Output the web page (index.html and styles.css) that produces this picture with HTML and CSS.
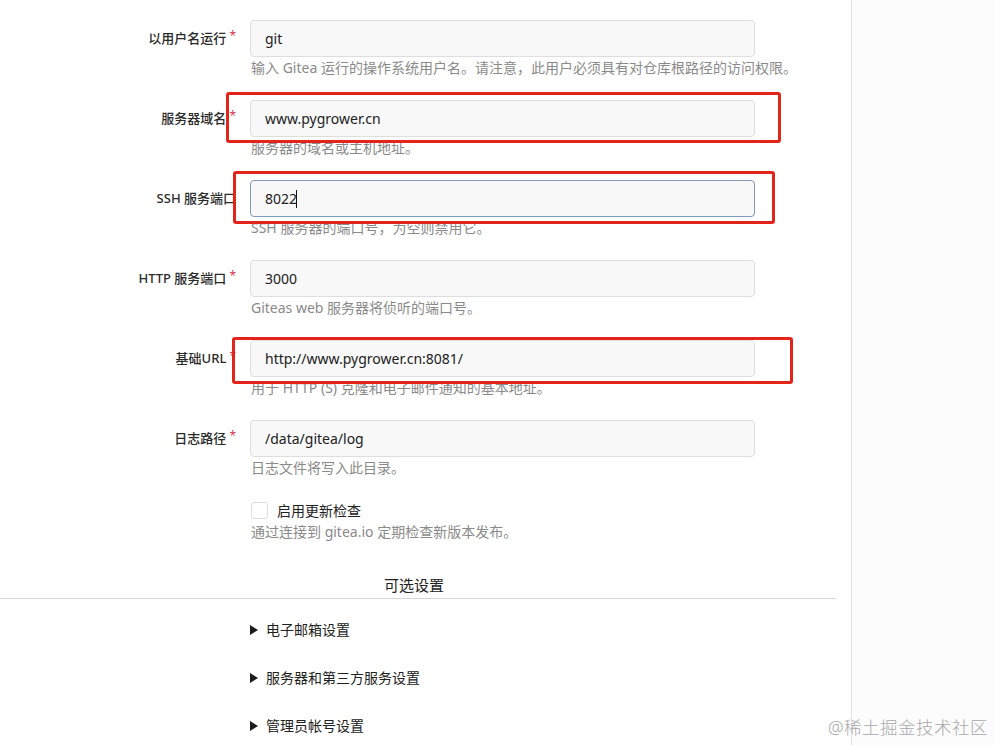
FILE: index.html
```html
<!DOCTYPE html>
<html lang="zh-CN">
<head>
    <meta charset="UTF-8">
    <meta name="viewport" content="width=device-width, initial-scale=1.0">
    <title>Gitea 安装</title>
    <link rel="stylesheet" href="styles.css">
</head>
<body>
    <div class="page">
        <main class="install-form">
            <div class="field">
                <label class="field-label required">以用户名运行</label>
                <div class="field-body">
                    <input class="text-input" type="text" value="git">
                    <p class="help">输入 Gitea 运行的操作系统用户名。请注意，此用户必须具有对仓库根路径的访问权限。</p>
                </div>
            </div>

            <div class="field">
                <label class="field-label required">服务器域名</label>
                <div class="field-body">
                    <input class="text-input" type="text" value="www.pygrower.cn">
                    <p class="help">服务器的域名或主机地址。</p>
                </div>
                <span class="mark mark-domain"></span>
            </div>

            <div class="field">
                <label class="field-label">SSH 服务端口</label>
                <div class="field-body">
                    <div class="input-wrap">
                        <input class="text-input focused" type="text" value="8022">
                        <span class="caret"></span>
                    </div>
                    <p class="help">SSH 服务器的端口号，为空则禁用它。</p>
                </div>
                <span class="mark mark-ssh"></span>
            </div>

            <div class="field">
                <label class="field-label required">HTTP 服务端口</label>
                <div class="field-body">
                    <input class="text-input" type="text" value="3000">
                    <p class="help">Giteas web 服务器将侦听的端口号。</p>
                </div>
            </div>

            <div class="field">
                <label class="field-label required">基础URL</label>
                <div class="field-body">
                    <input class="text-input" type="text" value="http://www.pygrower.cn:8081/">
                    <p class="help">用于 HTTP (S) 克隆和电子邮件通知的基本地址。</p>
                </div>
                <span class="mark mark-url"></span>
            </div>

            <div class="field">
                <label class="field-label required">日志路径</label>
                <div class="field-body">
                    <input class="text-input" type="text" value="/data/gitea/log">
                    <p class="help">日志文件将写入此目录。</p>
                </div>
            </div>

            <div class="field checkbox-field">
                <span class="field-label"></span>
                <div class="field-body">
                    <label class="checkbox">
                        <span class="box"></span>
                        <span>启用更新检查</span>
                    </label>
                    <p class="help">通过连接到 gitea.io 定期检查新版本发布。</p>
                </div>
            </div>

            <h4 class="dividing-header">可选设置</h4>

            <details class="optional">
                <summary>电子邮箱设置</summary>
            </details>
            <details class="optional">
                <summary>服务器和第三方服务设置</summary>
            </details>
            <details class="optional">
                <summary>管理员帐号设置</summary>
            </details>
        </main>
        <aside class="side"></aside>
    </div>
    <div class="watermark">@稀土掘金技术社区</div>
</body>
</html>
```

FILE: styles.css
```css
html, body {
    margin: 0;
    padding: 0;
    height: 745px;
    overflow: hidden;
}
body {
    font-family: "Noto Sans", "Noto Sans CJK SC", sans-serif;
    font-size: 14px;
    color: #212121;
    background-color: #ffffff;
    position: relative;
}
.page {
    display: flex;
    height: 745px;
}
.install-form {
    width: 851px;
    flex: none;
    border-right: 1px solid #e2e2e4;
    padding-top: 20px;
}
.side {
    flex: 1;
    background-color: #fcfcfd;
}
.field {
    position: relative;
    display: grid;
    grid-template-columns: 236px 505px;
    column-gap: 14px;
    margin-bottom: 22px;
}
.field-label {
    text-align: right;
    font-size: 13px;
    font-weight: 500;
    line-height: 37px;
    color: #2a2a2a;
}
.required::after {
    content: "*";
    color: #d4364a;
    font-size: 12px;
    font-weight: 400;
    margin-left: 3px;
    vertical-align: top;
    line-height: 32px;
}
.text-input {
    display: block;
    box-sizing: border-box;
    width: 505px;
    height: 37px;
    margin: 0;
    padding: 0 14px;
    font-family: inherit;
    font-size: 14px;
    color: #212121;
    background-color: #f8f8f9;
    border: 1px solid #dedee0;
    border-radius: 4px;
    outline: none;
}
.text-input.focused {
    border-color: #7f9bb6;
}
.input-wrap {
    position: relative;
}
.caret {
    position: absolute;
    left: 46px;
    top: 10px;
    width: 1px;
    height: 18px;
    background-color: #111111;
}
.help {
    margin: 1px 0 0 1px;
    font-size: 14px;
    line-height: 20px;
    color: #8a8a8a;
    white-space: nowrap;
}
.checkbox-field .field-label {
    line-height: 20px;
}
.checkbox {
    display: flex;
    align-items: center;
    gap: 9px;
    height: 20px;
    font-size: 14px;
    color: #212121;
    padding-left: 1px;
}
.checkbox .box {
    box-sizing: border-box;
    width: 17px;
    height: 17px;
    border: 1px solid #dcdcde;
    border-radius: 3px;
    background-color: #ffffff;
}
.checkbox-field .help {
    margin-top: 2px;
}
.dividing-header {
    margin: 33px 15px 0 0;
    padding: 0 8px 3px 0;
    border-bottom: 1px solid #d6d6d8;
    text-align: center;
    font-size: 15px;
    font-weight: 400;
    line-height: 20px;
    color: #212121;
}
.optional {
    margin: 0 0 28px 250px;
}
.optional:first-of-type {
    margin-top: 21px;
}
.optional summary {
    list-style: none;
    display: flex;
    align-items: center;
    font-size: 14px;
    line-height: 20px;
    color: #212121;
}
.optional summary::-webkit-details-marker {
    display: none;
}
.optional summary::before {
    content: "";
    width: 0;
    height: 0;
    border-left: 8px solid #1b1b1b;
    border-top: 5px solid transparent;
    border-bottom: 5px solid transparent;
    margin-right: 8px;
}

/* red highlight boxes drawn over the screenshot */
.mark {
    position: absolute;
    box-sizing: border-box;
    border: 3px solid #e3241b;
    border-radius: 3px;
    pointer-events: none;
}
.mark-domain {
    left: 226px;
    top: -8px;
    width: 555px;
    height: 51px;
}
.mark-ssh {
    left: 233px;
    top: -9px;
    width: 542px;
    height: 53px;
}
.mark-url {
    left: 232px;
    top: -3px;
    width: 561px;
    height: 47px;
}
.watermark {
    position: absolute;
    right: 7px;
    bottom: 6px;
    font-size: 17.5px;
    font-weight: 300;
    color: #a9a9ab;
    letter-spacing: 0.5px;
}
```
